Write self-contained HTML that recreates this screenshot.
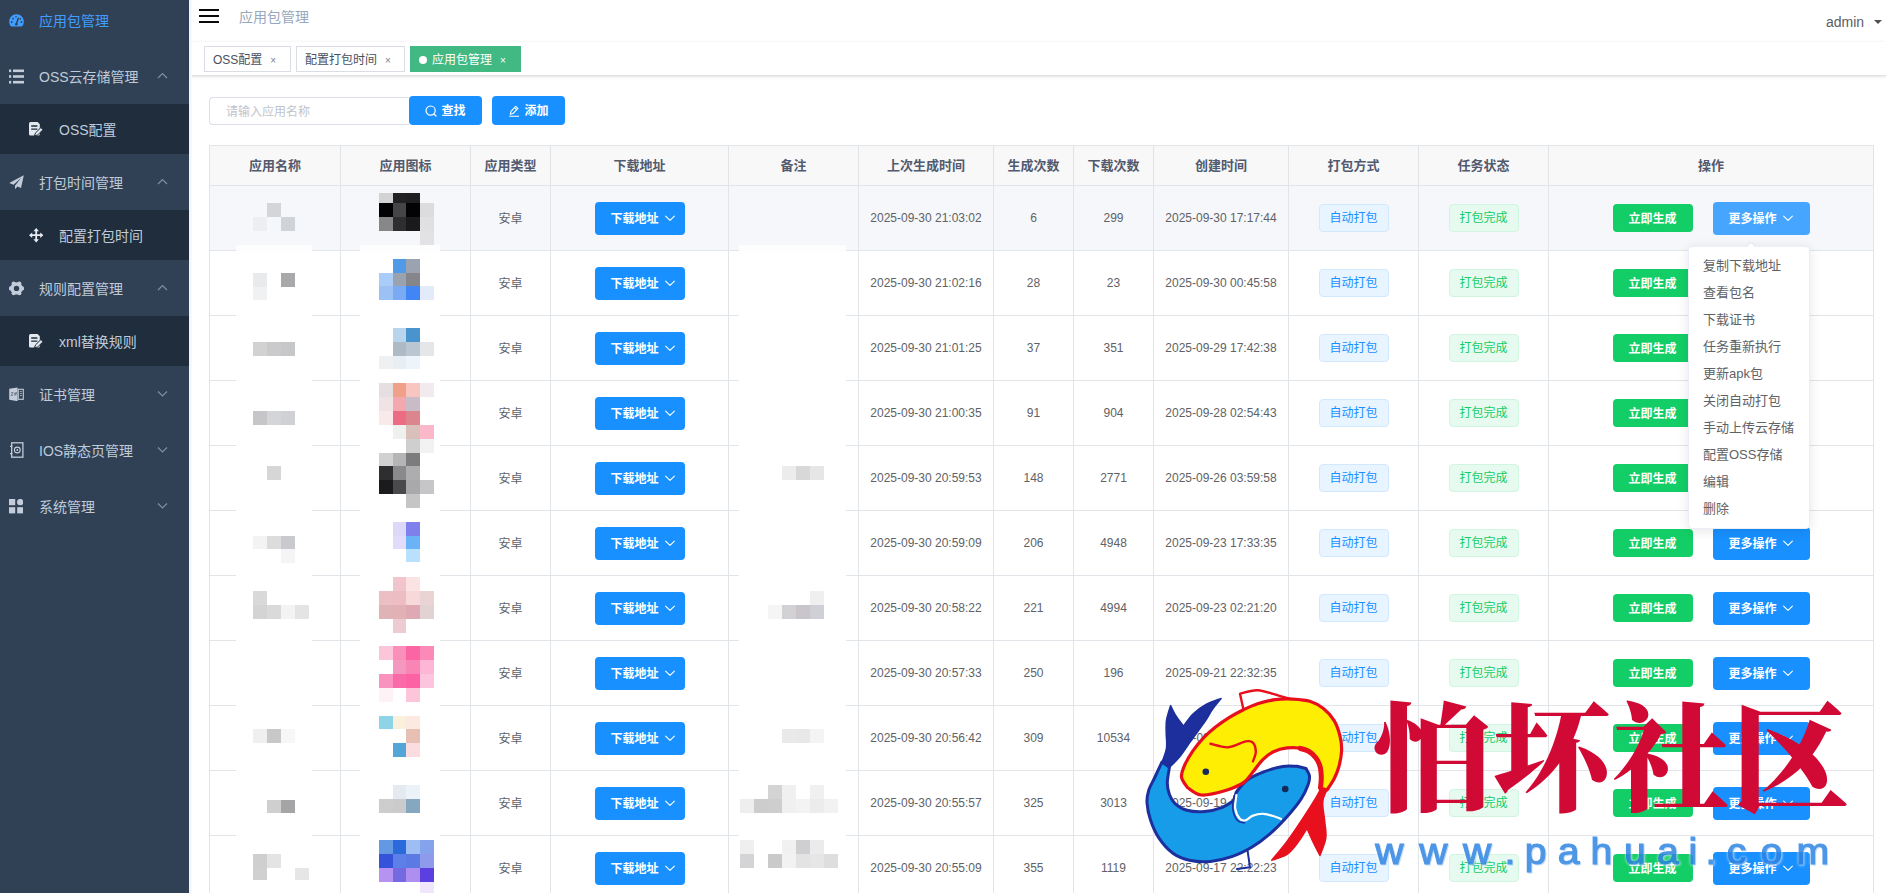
<!DOCTYPE html>
<html lang="zh-CN">
<head>
<meta charset="utf-8">
<title>应用包管理</title>
<style>
*{box-sizing:border-box;margin:0;padding:0}
html,body{width:1886px;height:893px;overflow:hidden;background:#fff}
body{font-family:"Liberation Sans","Noto Sans CJK SC",sans-serif;position:relative;color:#606266;font-size:12px}
#side{position:absolute;left:0;top:0;width:189px;height:893px;background:#304156;overflow:hidden}
.mi{position:absolute;left:0;width:189px;height:56px;color:#bfcbd9;font-size:14px;line-height:56px}
.mi .t{position:absolute;left:39px;top:1px;white-space:nowrap}
.mi.sub{background:#1f2d3d;height:50px;line-height:50px}
.mi.sub .t{left:59px}
.mi.act{color:#409eff}
#side svg.ic{position:absolute;z-index:2}
.mi svg.ca{position:absolute;left:157px;top:50%;width:11px;height:7px;margin-top:-4px}
#nav{position:absolute;left:189px;top:0;width:1697px;height:42px;background:#fff;box-shadow:0 1px 4px rgba(0,21,41,.08)}
#ham{position:absolute;left:10px;top:8.5px;width:20px;height:15px}
#ham i{position:absolute;left:0;width:20px;height:2.5px;background:#0a0a0a}
#bc{position:absolute;left:50px;top:7px;font-size:14px;line-height:20px;color:#97a8be;white-space:nowrap}
#user{position:absolute;left:1637px;top:12px;font-size:14px;line-height:20px;color:#5a5e66;white-space:nowrap}
#usercaret{position:absolute;left:1684.5px;top:20px;width:0;height:0;border:4px solid transparent;border-top:4.5px solid #505050;border-bottom:0}
#tags{position:absolute;left:189px;top:42px;width:1697px;height:34px;background:#fff;border-bottom:1px solid #dfe1e7;box-shadow:0 1px 3px 0 rgba(0,0,0,.10),0 0 3px 0 rgba(0,0,0,.03)}
.tg{position:absolute;top:4px;height:26px;line-height:26px;border:1px solid #dadde4;color:#495060;background:#fff;font-size:12px;padding:0 8px;white-space:nowrap}
.tg .x{display:inline-block;margin-left:8px;font-size:10px;color:#7b8190;position:relative;top:0px}
.tg.on{background:#42b983;border-color:#42b983;color:#fff}
.tg.on .x{color:#fff}
.tg.on:before{content:"";display:inline-block;width:8px;height:8px;border-radius:50%;background:#fff;margin-right:5px;position:relative;top:0px}
#inp{position:absolute;left:209px;top:97px;width:200px;height:28px;border:1px solid #dcdfe6;border-right:0;border-radius:4px 0 0 4px;background:#fff;font-size:12px;line-height:28px;color:#c0c4cc;padding-left:16px;white-space:nowrap}
.btn{display:inline-block;color:#fff;font-size:12px;font-weight:bold;border-radius:4px;white-space:nowrap;text-align:center;vertical-align:middle;position:relative}
.b1{position:absolute;top:96px;height:29px;line-height:30px;width:73px;background:#1890ff;border-radius:4px}
.b1 svg{display:inline-block;vertical-align:middle;position:relative;top:-1px;margin-right:4px}
table{position:absolute;left:209px;top:145px;border-collapse:collapse;table-layout:fixed;width:1664px}
th,td{border:1px solid #e1e5ea;text-align:center;overflow:hidden;white-space:nowrap}
th{height:40px;background:#f8f8f9;color:#515a6e;font-size:13px;font-weight:bold;padding-bottom:3px}
td{height:65px;color:#606266;font-size:12px}
tr.hov td{background:#f5f7fa}
td:nth-child(3){padding-bottom:2px}
.dl{width:90px;height:33px;line-height:35px;background:#1890ff;text-align:left;padding-left:16px}
.arr{position:absolute;width:12px;height:12px;top:50%;margin-top:-6px}
.dl .arr{left:69px}
.gen{width:80px;height:28px;line-height:30px;background:#13ce66}
.more{width:97px;height:33px;line-height:35px;background:#1890ff;margin-left:20px;text-align:left;padding-left:16px}
.more .arr{left:69px}
.hovb{background:#46a6ff}
.tag{display:inline-block;width:70px;height:28px;line-height:26px;border-radius:4px;font-size:12px;border:1px solid;vertical-align:middle}
.tb{background:#e8f4ff;border-color:#d1e9ff;color:#1890ff}
.tg2{}
.tag.tg{position:static;background:#e7faf0;border-color:#d0f5e0;color:#13ce66;padding:0}
#dd{position:absolute;left:1688px;top:246px;width:122px;height:283px;background:#fff;border:1px solid #ebeef5;border-radius:4px;box-shadow:0 2px 12px 0 rgba(0,0,0,.1);padding:6px 0;z-index:5}
#dd div{height:27px;line-height:25px;padding-left:14px;font-size:13px;color:#606266;white-space:nowrap}
#ddar{position:absolute;left:1747px;top:242.5px;width:0;height:0;border:4.5px solid transparent;border-top:0;border-bottom:4px solid #fff;z-index:6;filter:drop-shadow(0 -1px 1px rgba(0,0,0,.06))}
#edge{position:absolute;left:189px;top:0;width:3px;height:893px;background:linear-gradient(90deg,#eef2fb,#f8fafe);z-index:4}
#mos{position:absolute;left:0;top:0;z-index:3}
#wm{position:absolute;left:0;top:0;z-index:9}
</style>
</head>
<body>
<div id="side">
 <div class="mi act" style="top:-8px"><span class="t">应用包管理</span></div>
 <div class="mi" style="top:48px"><span class="t">OSS云存储管理</span><svg class="ca" viewBox="0 0 11 7"><path d="M1 6 L5.5 1.5 L10 6" fill="none" stroke="#7f8da2" stroke-width="1.2"/></svg></div>
 <div class="mi sub" style="top:104px"><span class="t">OSS配置</span></div>
 <div class="mi" style="top:154px"><span class="t">打包时间管理</span><svg class="ca" viewBox="0 0 11 7"><path d="M1 6 L5.5 1.5 L10 6" fill="none" stroke="#7f8da2" stroke-width="1.2"/></svg></div>
 <div class="mi sub" style="top:210px"><span class="t">配置打包时间</span></div>
 <div class="mi" style="top:260px"><span class="t">规则配置管理</span><svg class="ca" viewBox="0 0 11 7"><path d="M1 6 L5.5 1.5 L10 6" fill="none" stroke="#7f8da2" stroke-width="1.2"/></svg></div>
 <div class="mi sub" style="top:316px"><span class="t">xml替换规则</span></div>
 <div class="mi" style="top:366px"><span class="t">证书管理</span><svg class="ca" viewBox="0 0 11 7"><path d="M1 1.5 L5.5 6 L10 1.5" fill="none" stroke="#7f8da2" stroke-width="1.2"/></svg></div>
 <div class="mi" style="top:422px"><span class="t">IOS静态页管理</span><svg class="ca" viewBox="0 0 11 7"><path d="M1 1.5 L5.5 6 L10 1.5" fill="none" stroke="#7f8da2" stroke-width="1.2"/></svg></div>
 <div class="mi" style="top:478px"><span class="t">系统管理</span><svg class="ca" viewBox="0 0 11 7"><path d="M1 1.5 L5.5 6 L10 1.5" fill="none" stroke="#7f8da2" stroke-width="1.2"/></svg></div>

 <svg class="ic" style="left:8.5px;top:14px" width="15" height="13" viewBox="0 0 15 13"><path d="M7.5 .3C3.4 .3 .2 3.6 .2 7.6c0 1.7 .5 3.2 1.4 4.4 .2 .3 .5 .4 .8 .4h10.2c.3 0 .6-.1 .8-.4 .9-1.2 1.400-2.700 1.400-4.400C14.800 3.600 11.600 .3 7.500 .3Z" fill="#409eff"/><path d="M7.300 10.200 L9.300 4.200" stroke="#304156" stroke-width="1.500" stroke-linecap="round"/><circle cx="7.300" cy="10.200" r="1.300" fill="#304156"/><circle cx="2.700" cy="8" r=".9" fill="#304156"/><circle cx="4" cy="4.600" r=".9" fill="#304156"/><circle cx="7" cy="2.800" r=".8" fill="#304156"/><circle cx="11.300" cy="4.800" r=".9" fill="#304156"/><circle cx="12.400" cy="8" r=".9" fill="#304156"/></svg>
 <svg class="ic" style="left:8.500px;top:68.500px" width="15" height="15" viewBox="0 0 15 15" fill="#c3ccd8"><rect x="0" y=".5" width="2.200" height="2.600"/><rect x="4" y=".5" width="11" height="2.600"/><rect x="0" y="6.200" width="2.200" height="2.600"/><rect x="4" y="6.200" width="11" height="2.600"/><rect x="0" y="11.900" width="2.200" height="2.600"/><rect x="4" y="11.900" width="11" height="2.600"/></svg>
 <svg class="ic" style="left:28.800px;top:122.300px" width="14.500" height="14" viewBox="0 0 14.500 14"><path d="M1.600 0 H8.600 L10.800 2.200 V12 Q10.800 13.600 9.200 13.600 H1.600 Q0 13.600 0 12 V1.600 Q0 0 1.600 0 Z" fill="#e4e9ef"/><path d="M2.200 4 H8.400 M2.200 7.200 H8.400" stroke="#1f2d3d" stroke-width="1.300"/><path d="M5.400 13.900 L6.600 10.800 L11.900 5.600 L14 7.700 L8.700 12.900 Z" fill="#e4e9ef" stroke="#1f2d3d" stroke-width="1"/></svg>
 <svg class="ic" style="left:8.500px;top:174.500px" width="15" height="14.500" viewBox="0 0 15 14.500" fill="#c3ccd8"><path d="M14.800 .2 L.2 8 L4.600 9.800 L12.200 2.800 L6 10.700 L6 14.200 L8.500 11.500 L12 13 Z"/></svg>
 <svg class="ic" style="left:28.800px;top:228.400px" width="14.400" height="14.400" viewBox="0 0 14.400 14.400" fill="#e8ecf1"><path d="M7.200 0 L10 3.200 H8.100 V6.300 H11.200 V4.400 L14.400 7.200 L11.200 10 V8.100 H8.100 V11.200 H10 L7.200 14.400 L4.400 11.200 H6.300 V8.100 H3.200 V10 L0 7.200 L3.200 4.400 V6.300 H6.300 V3.200 H4.400 Z"/></svg>
 <svg class="ic" style="left:8.500px;top:280.800px" width="15" height="14.800" viewBox="0 0 15 14.800"><g fill="#c3ccd8"><circle cx="7.500" cy="7.400" r="6.200"/><circle cx="13.10" cy="7.40" r="2.1"/><circle cx="10.30" cy="12.25" r="2.1"/><circle cx="4.70" cy="12.25" r="2.1"/><circle cx="1.90" cy="7.40" r="2.1"/><circle cx="4.70" cy="2.55" r="2.1"/><circle cx="10.30" cy="2.55" r="2.1"/></g><circle cx="7.500" cy="7.400" r="2.700" fill="#304156"/></svg>
 <svg class="ic" style="left:28.800px;top:334px" width="14.500" height="14" viewBox="0 0 14.500 14"><path d="M1.600 0 H8.600 L10.800 2.200 V12 Q10.800 13.600 9.200 13.600 H1.600 Q0 13.600 0 12 V1.600 Q0 0 1.600 0 Z" fill="#e4e9ef"/><path d="M2.200 4 H8.400 M2.200 7.200 H8.400" stroke="#1f2d3d" stroke-width="1.300"/><path d="M5.400 13.900 L6.600 10.800 L11.900 5.600 L14 7.700 L8.700 12.900 Z" fill="#e4e9ef" stroke="#1f2d3d" stroke-width="1"/></svg>
 <svg class="ic" style="left:8.500px;top:386.800px" width="15" height="14.600" viewBox="0 0 15 14.600"><path d="M.2 1.800 L8.600 .4 V14.200 L.2 12.800 Z" fill="#c3ccd8"/><rect x="9.300" y="2.300" width="5" height="10" fill="none" stroke="#c3ccd8" stroke-width="1.100"/><path d="M2 5.600 H4 L2 8.400 H4 M5.400 5.600 V8.400 M6.600 8.400 V5.600 H7.600 V7 H6.600" stroke="#55657a" stroke-width=".7" fill="none"/><path d="M10.800 4.600 H12.800 M10.800 6.600 H12.800 M10.800 8.600 H12.800" stroke="#c3ccd8" stroke-width=".8"/></svg>
 <svg class="ic" style="left:9.500px;top:442px" width="14" height="16" viewBox="0 0 14 16" fill="none" stroke="#c3ccd8"><rect x="1.700" y=".8" width="11.200" height="14.400" stroke-width="1.300"/><circle cx="7.300" cy="8" r="2.900" stroke-width="1.100"/><circle cx="7.300" cy="8" r=".9" fill="#c3ccd8" stroke="none"/><path d="M0 4.300 H2.200 M0 11.700 H2.200" stroke-width="1.200"/></svg>
 <svg class="ic" style="left:8.800px;top:499.200px" width="14.400" height="14.400" viewBox="0 0 14.400 14.400" fill="#c3ccd8"><rect x="0" y="0" width="6.200" height="6.200"/><circle cx="11.200" cy="3.100" r="3.200"/><rect x="0" y="8.200" width="6.200" height="6.200"/><rect x="8.200" y="8.200" width="6.200" height="6.200"/></svg>
</div>
<div id="edge"></div>
<div id="nav">
 <div id="ham"><i style="top:0"></i><i style="top:6px"></i><i style="top:12px"></i></div>
 <div id="bc">应用包管理</div>
 <div id="user">admin</div><div id="usercaret"></div>
</div>
<div id="tags">
 <span class="tg" style="left:15px;width:87px">OSS配置<span class="x">×</span></span>
 <span class="tg" style="left:107px;width:109px">配置打包时间<span class="x">×</span></span>
 <span class="tg on" style="left:221px;width:111px">应用包管理<span class="x">×</span></span>
</div>
<div id="inp">请输入应用名称</div>
<span class="btn b1" style="left:409px"><svg width="12" height="12" viewBox="0 0 12 12"><circle cx="5.6" cy="5.6" r="4.6" fill="none" stroke="#fff" stroke-width="1.2"/><path d="M9 9 L11 11" stroke="#fff" stroke-width="1.3" stroke-linecap="round"/></svg>查找</span>
<span class="btn b1" style="left:492px"><svg width="12" height="12" viewBox="0 0 12 12"><path d="M2.300 9.300 L3 6.300 L7.700 1.300 L9.900 3.400 L5.100 8.500 Z M6.500 2.600 L8.600 4.700 M1.200 11.200 H11" fill="none" stroke="#fff" stroke-width="1.100" stroke-linejoin="round"/></svg>添加</span>
<table>
<colgroup><col style="width:131px"><col style="width:130px"><col style="width:80px"><col style="width:178px"><col style="width:130px"><col style="width:135px"><col style="width:80px"><col style="width:80px"><col style="width:135px"><col style="width:130px"><col style="width:130px"><col style="width:325px"></colgroup>
<thead><tr><th>应用名称</th><th>应用图标</th><th>应用类型</th><th>下载地址</th><th>备注</th><th>上次生成时间</th><th>生成次数</th><th>下载次数</th><th>创建时间</th><th>打包方式</th><th>任务状态</th><th>操作</th></tr></thead>
<tbody>
<tr class="hov"><td></td><td></td><td>安卓</td><td><span class="btn dl">下载地址<svg class="arr" viewBox="0 0 12 12"><path d="M1.6 4.1 L6 8.3 L10.4 4.1" fill="none" stroke="#fff" stroke-width="1.1" stroke-linecap="round" stroke-linejoin="round"/></svg></span></td><td></td><td>2025-09-30 21:03:02</td><td>6</td><td>299</td><td>2025-09-30 17:17:44</td><td><span class="tag tb">自动打包</span></td><td><span class="tag tg">打包完成</span></td><td><span class="btn gen">立即生成</span><span class="btn more hovb">更多操作<svg class="arr" viewBox="0 0 12 12"><path d="M1.6 4.1 L6 8.3 L10.4 4.1" fill="none" stroke="#fff" stroke-width="1.1" stroke-linecap="round" stroke-linejoin="round"/></svg></span></td></tr>
<tr><td></td><td></td><td>安卓</td><td><span class="btn dl">下载地址<svg class="arr" viewBox="0 0 12 12"><path d="M1.6 4.1 L6 8.3 L10.4 4.1" fill="none" stroke="#fff" stroke-width="1.1" stroke-linecap="round" stroke-linejoin="round"/></svg></span></td><td></td><td>2025-09-30 21:02:16</td><td>28</td><td>23</td><td>2025-09-30 00:45:58</td><td><span class="tag tb">自动打包</span></td><td><span class="tag tg">打包完成</span></td><td><span class="btn gen">立即生成</span><span class="btn more">更多操作<svg class="arr" viewBox="0 0 12 12"><path d="M1.6 4.1 L6 8.3 L10.4 4.1" fill="none" stroke="#fff" stroke-width="1.1" stroke-linecap="round" stroke-linejoin="round"/></svg></span></td></tr>
<tr><td></td><td></td><td>安卓</td><td><span class="btn dl">下载地址<svg class="arr" viewBox="0 0 12 12"><path d="M1.6 4.1 L6 8.3 L10.4 4.1" fill="none" stroke="#fff" stroke-width="1.1" stroke-linecap="round" stroke-linejoin="round"/></svg></span></td><td></td><td>2025-09-30 21:01:25</td><td>37</td><td>351</td><td>2025-09-29 17:42:38</td><td><span class="tag tb">自动打包</span></td><td><span class="tag tg">打包完成</span></td><td><span class="btn gen">立即生成</span><span class="btn more">更多操作<svg class="arr" viewBox="0 0 12 12"><path d="M1.6 4.1 L6 8.3 L10.4 4.1" fill="none" stroke="#fff" stroke-width="1.1" stroke-linecap="round" stroke-linejoin="round"/></svg></span></td></tr>
<tr><td></td><td></td><td>安卓</td><td><span class="btn dl">下载地址<svg class="arr" viewBox="0 0 12 12"><path d="M1.6 4.1 L6 8.3 L10.4 4.1" fill="none" stroke="#fff" stroke-width="1.1" stroke-linecap="round" stroke-linejoin="round"/></svg></span></td><td></td><td>2025-09-30 21:00:35</td><td>91</td><td>904</td><td>2025-09-28 02:54:43</td><td><span class="tag tb">自动打包</span></td><td><span class="tag tg">打包完成</span></td><td><span class="btn gen">立即生成</span><span class="btn more">更多操作<svg class="arr" viewBox="0 0 12 12"><path d="M1.6 4.1 L6 8.3 L10.4 4.1" fill="none" stroke="#fff" stroke-width="1.1" stroke-linecap="round" stroke-linejoin="round"/></svg></span></td></tr>
<tr><td></td><td></td><td>安卓</td><td><span class="btn dl">下载地址<svg class="arr" viewBox="0 0 12 12"><path d="M1.6 4.1 L6 8.3 L10.4 4.1" fill="none" stroke="#fff" stroke-width="1.1" stroke-linecap="round" stroke-linejoin="round"/></svg></span></td><td></td><td>2025-09-30 20:59:53</td><td>148</td><td>2771</td><td>2025-09-26 03:59:58</td><td><span class="tag tb">自动打包</span></td><td><span class="tag tg">打包完成</span></td><td><span class="btn gen">立即生成</span><span class="btn more">更多操作<svg class="arr" viewBox="0 0 12 12"><path d="M1.6 4.1 L6 8.3 L10.4 4.1" fill="none" stroke="#fff" stroke-width="1.1" stroke-linecap="round" stroke-linejoin="round"/></svg></span></td></tr>
<tr><td></td><td></td><td>安卓</td><td><span class="btn dl">下载地址<svg class="arr" viewBox="0 0 12 12"><path d="M1.6 4.1 L6 8.3 L10.4 4.1" fill="none" stroke="#fff" stroke-width="1.1" stroke-linecap="round" stroke-linejoin="round"/></svg></span></td><td></td><td>2025-09-30 20:59:09</td><td>206</td><td>4948</td><td>2025-09-23 17:33:35</td><td><span class="tag tb">自动打包</span></td><td><span class="tag tg">打包完成</span></td><td><span class="btn gen">立即生成</span><span class="btn more">更多操作<svg class="arr" viewBox="0 0 12 12"><path d="M1.6 4.1 L6 8.3 L10.4 4.1" fill="none" stroke="#fff" stroke-width="1.1" stroke-linecap="round" stroke-linejoin="round"/></svg></span></td></tr>
<tr><td></td><td></td><td>安卓</td><td><span class="btn dl">下载地址<svg class="arr" viewBox="0 0 12 12"><path d="M1.6 4.1 L6 8.3 L10.4 4.1" fill="none" stroke="#fff" stroke-width="1.1" stroke-linecap="round" stroke-linejoin="round"/></svg></span></td><td></td><td>2025-09-30 20:58:22</td><td>221</td><td>4994</td><td>2025-09-23 02:21:20</td><td><span class="tag tb">自动打包</span></td><td><span class="tag tg">打包完成</span></td><td><span class="btn gen">立即生成</span><span class="btn more">更多操作<svg class="arr" viewBox="0 0 12 12"><path d="M1.6 4.1 L6 8.3 L10.4 4.1" fill="none" stroke="#fff" stroke-width="1.1" stroke-linecap="round" stroke-linejoin="round"/></svg></span></td></tr>
<tr><td></td><td></td><td>安卓</td><td><span class="btn dl">下载地址<svg class="arr" viewBox="0 0 12 12"><path d="M1.6 4.1 L6 8.3 L10.4 4.1" fill="none" stroke="#fff" stroke-width="1.1" stroke-linecap="round" stroke-linejoin="round"/></svg></span></td><td></td><td>2025-09-30 20:57:33</td><td>250</td><td>196</td><td>2025-09-21 22:32:35</td><td><span class="tag tb">自动打包</span></td><td><span class="tag tg">打包完成</span></td><td><span class="btn gen">立即生成</span><span class="btn more">更多操作<svg class="arr" viewBox="0 0 12 12"><path d="M1.6 4.1 L6 8.3 L10.4 4.1" fill="none" stroke="#fff" stroke-width="1.1" stroke-linecap="round" stroke-linejoin="round"/></svg></span></td></tr>
<tr><td></td><td></td><td>安卓</td><td><span class="btn dl">下载地址<svg class="arr" viewBox="0 0 12 12"><path d="M1.6 4.1 L6 8.3 L10.4 4.1" fill="none" stroke="#fff" stroke-width="1.1" stroke-linecap="round" stroke-linejoin="round"/></svg></span></td><td></td><td>2025-09-30 20:56:42</td><td>309</td><td>10534</td><td>2025-09-20 09:11:06</td><td><span class="tag tb">自动打包</span></td><td><span class="tag tg">打包完成</span></td><td><span class="btn gen">立即生成</span><span class="btn more">更多操作<svg class="arr" viewBox="0 0 12 12"><path d="M1.6 4.1 L6 8.3 L10.4 4.1" fill="none" stroke="#fff" stroke-width="1.1" stroke-linecap="round" stroke-linejoin="round"/></svg></span></td></tr>
<tr><td></td><td></td><td>安卓</td><td><span class="btn dl">下载地址<svg class="arr" viewBox="0 0 12 12"><path d="M1.6 4.1 L6 8.3 L10.4 4.1" fill="none" stroke="#fff" stroke-width="1.1" stroke-linecap="round" stroke-linejoin="round"/></svg></span></td><td></td><td>2025-09-30 20:55:57</td><td>325</td><td>3013</td><td>2025-09-19 12:40:51</td><td><span class="tag tb">自动打包</span></td><td><span class="tag tg">打包完成</span></td><td><span class="btn gen">立即生成</span><span class="btn more">更多操作<svg class="arr" viewBox="0 0 12 12"><path d="M1.6 4.1 L6 8.3 L10.4 4.1" fill="none" stroke="#fff" stroke-width="1.1" stroke-linecap="round" stroke-linejoin="round"/></svg></span></td></tr>
<tr><td></td><td></td><td>安卓</td><td><span class="btn dl">下载地址<svg class="arr" viewBox="0 0 12 12"><path d="M1.6 4.1 L6 8.3 L10.4 4.1" fill="none" stroke="#fff" stroke-width="1.1" stroke-linecap="round" stroke-linejoin="round"/></svg></span></td><td></td><td>2025-09-30 20:55:09</td><td>355</td><td>1119</td><td>2025-09-17 22:22:23</td><td><span class="tag tb">自动打包</span></td><td><span class="tag tg">打包完成</span></td><td><span class="btn gen">立即生成</span><span class="btn more">更多操作<svg class="arr" viewBox="0 0 12 12"><path d="M1.6 4.1 L6 8.3 L10.4 4.1" fill="none" stroke="#fff" stroke-width="1.1" stroke-linecap="round" stroke-linejoin="round"/></svg></span></td></tr>
</tbody>
</table>
<div id="ddar"></div>
<div id="dd"><div>复制下载地址</div><div>查看包名</div><div>下载证书</div><div>任务重新执行</div><div>更新apk包</div><div>关闭自动打包</div><div>手动上传云存储</div><div>配置OSS存储</div><div>编辑</div><div>删除</div></div>
<svg id="mos" width="1886" height="893" viewBox="0 0 1886 893" shape-rendering="crispEdges">
<rect x="236" y="244.500" width="76" height="7" fill="#fdfdfe"/>
<rect x="360" y="244.500" width="80" height="7" fill="#fdfdfe"/>
<rect x="739" y="244.500" width="107" height="7" fill="#fdfdfe"/>
<rect x="236" y="314" width="76" height="3" fill="#fff"/>
<rect x="360" y="314" width="80" height="3" fill="#fff"/>
<rect x="739" y="314" width="107" height="3" fill="#fff"/>
<rect x="236" y="379" width="76" height="3" fill="#fff"/>
<rect x="360" y="379" width="80" height="3" fill="#fff"/>
<rect x="739" y="379" width="107" height="3" fill="#fff"/>
<rect x="236" y="444" width="76" height="3" fill="#fff"/>
<rect x="360" y="444" width="80" height="3" fill="#fff"/>
<rect x="739" y="444" width="107" height="3" fill="#fff"/>
<rect x="236" y="509" width="76" height="3" fill="#fff"/>
<rect x="360" y="509" width="80" height="3" fill="#fff"/>
<rect x="739" y="509" width="107" height="3" fill="#fff"/>
<rect x="236" y="574" width="76" height="3" fill="#fff"/>
<rect x="360" y="574" width="80" height="3" fill="#fff"/>
<rect x="739" y="574" width="107" height="3" fill="#fff"/>
<rect x="236" y="639" width="76" height="3" fill="#fff"/>
<rect x="360" y="639" width="80" height="3" fill="#fff"/>
<rect x="739" y="639" width="107" height="3" fill="#fff"/>
<rect x="236" y="704" width="76" height="3" fill="#fff"/>
<rect x="360" y="704" width="80" height="3" fill="#fff"/>
<rect x="739" y="704" width="107" height="3" fill="#fff"/>
<rect x="236" y="769" width="76" height="3" fill="#fff"/>
<rect x="360" y="769" width="80" height="3" fill="#fff"/>
<rect x="739" y="769" width="107" height="3" fill="#fff"/>
<rect x="236" y="834" width="76" height="3" fill="#fff"/>
<rect x="360" y="834" width="80" height="3" fill="#fff"/>
<rect x="739" y="834" width="107" height="3" fill="#fff"/>
<rect x="267" y="203" width="14" height="14" fill="#d4d5d8"/>
<rect x="253" y="217" width="14" height="14" fill="#eceef2"/>
<rect x="281" y="217" width="14" height="14" fill="#d0d4d9"/>
<rect x="253" y="273" width="14" height="14" fill="#e9eaec"/>
<rect x="281" y="273" width="14" height="14" fill="#a9a9ab"/>
<rect x="253" y="287" width="14" height="13" fill="#f0f1f3"/>
<rect x="253" y="342" width="14" height="14" fill="#d2d2d3"/>
<rect x="267" y="342" width="14" height="14" fill="#cacacc"/>
<rect x="281" y="342" width="14" height="14" fill="#c6c7c9"/>
<rect x="253" y="411" width="14" height="14" fill="#c6c6c8"/>
<rect x="267" y="411" width="14" height="14" fill="#d3d5d9"/>
<rect x="281" y="411" width="14" height="14" fill="#cfd1d5"/>
<rect x="267" y="466" width="14" height="14" fill="#d6d6d7"/>
<rect x="253" y="536" width="14" height="13" fill="#f3f3f3"/>
<rect x="267" y="536" width="14" height="13" fill="#dcdcdd"/>
<rect x="281" y="536" width="14" height="13" fill="#c8cacd"/>
<rect x="281" y="549" width="14" height="14" fill="#f5f5f6"/>
<rect x="253" y="591" width="14" height="14" fill="#d9d9da"/>
<rect x="253" y="605" width="14" height="13.5" fill="#d4d4d5"/>
<rect x="267" y="605" width="14" height="13.5" fill="#dadadb"/>
<rect x="281" y="605" width="14" height="13.5" fill="#f3f3f3"/>
<rect x="295" y="605" width="14" height="13.5" fill="#e4e4e4"/>
<rect x="253" y="729" width="14" height="14" fill="#efefef"/>
<rect x="267" y="729" width="14" height="14" fill="#c8c8c9"/>
<rect x="281" y="729" width="14" height="14" fill="#f7f7f7"/>
<rect x="267" y="799.5" width="14" height="13.5" fill="#cfcfd0"/>
<rect x="281" y="799.5" width="14" height="13.5" fill="#a5a5a7"/>
<rect x="253" y="854" width="14" height="14" fill="#cfcfd0"/>
<rect x="267" y="854" width="14" height="14" fill="#e4e4e5"/>
<rect x="253" y="868" width="14" height="12" fill="#d0d0d1"/>
<rect x="295" y="868" width="14" height="12" fill="#e6e6e7"/>
<rect x="379" y="193" width="13.5" height="10" fill="#d3d3d4"/>
<rect x="392.5" y="193" width="13.5" height="10" fill="#222224"/>
<rect x="406" y="193" width="14" height="10" fill="#1f1f22"/>
<rect x="379" y="203" width="13.5" height="14" fill="#020204"/>
<rect x="392.5" y="203" width="13.5" height="14" fill="#454547"/>
<rect x="406" y="203" width="14" height="14" fill="#030305"/>
<rect x="420" y="203" width="14" height="14" fill="#dcdcde"/>
<rect x="379" y="217" width="13.5" height="14" fill="#878788"/>
<rect x="392.5" y="217" width="13.5" height="14" fill="#2e2e30"/>
<rect x="406" y="217" width="14" height="14" fill="#1a1a1d"/>
<rect x="420" y="217" width="14" height="14" fill="#e0e0e2"/>
<rect x="420" y="231" width="14" height="14" fill="#e2e2e4"/>
<rect x="392.5" y="259" width="13.5" height="14" fill="#4f9be8"/>
<rect x="406" y="259" width="14" height="14" fill="#9aa3af"/>
<rect x="379" y="273" width="13.5" height="13" fill="#a9cdf8"/>
<rect x="392.5" y="273" width="13.5" height="13" fill="#9aa2b0"/>
<rect x="406" y="273" width="14" height="13" fill="#858689"/>
<rect x="379" y="286" width="13.5" height="14" fill="#9cc2f5"/>
<rect x="392.5" y="286" width="13.5" height="14" fill="#7aaaf3"/>
<rect x="406" y="286" width="14" height="14" fill="#4285f4"/>
<rect x="420" y="286" width="14" height="14" fill="#e3eafa"/>
<rect x="392.5" y="328" width="13.5" height="14" fill="#b9d5ee"/>
<rect x="406" y="328" width="14" height="14" fill="#4a94cd"/>
<rect x="392.5" y="342" width="13.5" height="14" fill="#afbbc4"/>
<rect x="406" y="342" width="14" height="14" fill="#bac6d1"/>
<rect x="420" y="342" width="14" height="14" fill="#e5e6e7"/>
<rect x="379" y="356" width="13.5" height="13" fill="#eef0f2"/>
<rect x="392.5" y="356" width="13.5" height="13" fill="#e7eef4"/>
<rect x="406" y="356" width="14" height="13" fill="#edf4fc"/>
<rect x="379" y="383" width="13.5" height="14" fill="#e6dfe1"/>
<rect x="392.5" y="383" width="13.5" height="14" fill="#f0a089"/>
<rect x="406" y="383" width="14" height="14" fill="#f9c5c0"/>
<rect x="420" y="383" width="14" height="14" fill="#f1ebee"/>
<rect x="379" y="397" width="13.5" height="14" fill="#f1e3e5"/>
<rect x="392.5" y="397" width="13.5" height="14" fill="#f3a7af"/>
<rect x="406" y="397" width="14" height="14" fill="#c9bcc7"/>
<rect x="379" y="411" width="13.5" height="14" fill="#fae9eb"/>
<rect x="392.5" y="411" width="13.5" height="14" fill="#ec6c84"/>
<rect x="406" y="411" width="14" height="14" fill="#dc858f"/>
<rect x="392.5" y="425" width="13.5" height="14" fill="#eef1ee"/>
<rect x="406" y="425" width="14" height="14" fill="#d9c0bb"/>
<rect x="420" y="425" width="14" height="14" fill="#fbb8c8"/>
<rect x="406" y="439" width="14" height="14" fill="#cfcfd0"/>
<rect x="420" y="439" width="14" height="14" fill="#f2f2f2"/>
<rect x="379" y="453" width="13.5" height="13" fill="#d1d1d2"/>
<rect x="392.5" y="453" width="13.5" height="13" fill="#b5b5b6"/>
<rect x="406" y="453" width="14" height="13" fill="#7c7c7e"/>
<rect x="379" y="466" width="13.5" height="14" fill="#2e2e30"/>
<rect x="392.5" y="466" width="13.5" height="14" fill="#8a8a8c"/>
<rect x="406" y="466" width="14" height="14" fill="#adadaf"/>
<rect x="379" y="480" width="13.5" height="14" fill="#1b1b1d"/>
<rect x="392.5" y="480" width="13.5" height="14" fill="#4a4a4c"/>
<rect x="406" y="480" width="14" height="14" fill="#a9a9ab"/>
<rect x="420" y="480" width="14" height="14" fill="#c6c6c8"/>
<rect x="406" y="494" width="14" height="14" fill="#c5c5c6"/>
<rect x="392.5" y="522" width="13.5" height="14" fill="#dcd8f8"/>
<rect x="406" y="522" width="14" height="14" fill="#7f80ec"/>
<rect x="392.5" y="536" width="13.5" height="13" fill="#e2dcfa"/>
<rect x="406" y="536" width="14" height="13" fill="#6bb3f7"/>
<rect x="406" y="549" width="14" height="13" fill="#b9e0fc"/>
<rect x="392.5" y="577" width="13.5" height="14" fill="#f2c4cb"/>
<rect x="406" y="577" width="14" height="14" fill="#fce3e3"/>
<rect x="379" y="591" width="13.5" height="14" fill="#ecbfc5"/>
<rect x="392.5" y="591" width="13.5" height="14" fill="#ecbdc2"/>
<rect x="406" y="591" width="14" height="14" fill="#f7d9d9"/>
<rect x="420" y="591" width="14" height="14" fill="#e9d3d3"/>
<rect x="379" y="605" width="13.5" height="14" fill="#e0b3b6"/>
<rect x="392.5" y="605" width="13.5" height="14" fill="#e1b1b5"/>
<rect x="406" y="605" width="14" height="14" fill="#dfa9b3"/>
<rect x="420" y="605" width="14" height="14" fill="#e3d2d2"/>
<rect x="392.5" y="619" width="13.5" height="14" fill="#ecccd1"/>
<rect x="379" y="646" width="13.5" height="14" fill="#fcc5da"/>
<rect x="392.5" y="646" width="13.5" height="14" fill="#fa8fba"/>
<rect x="406" y="646" width="14" height="14" fill="#fb65a4"/>
<rect x="420" y="646" width="14" height="14" fill="#fb8ab9"/>
<rect x="392.5" y="660" width="13.5" height="14" fill="#f598c0"/>
<rect x="406" y="660" width="14" height="14" fill="#f984b6"/>
<rect x="420" y="660" width="14" height="14" fill="#fdb6d6"/>
<rect x="379" y="674" width="13.5" height="14" fill="#fa92bf"/>
<rect x="392.5" y="674" width="13.5" height="14" fill="#fa6aa8"/>
<rect x="406" y="674" width="14" height="14" fill="#fc62a4"/>
<rect x="420" y="674" width="14" height="14" fill="#fdc4de"/>
<rect x="379" y="688" width="13.5" height="14" fill="#fdf3f6"/>
<rect x="406" y="688" width="14" height="14" fill="#fcc5da"/>
<rect x="379" y="716" width="13.5" height="13" fill="#8dd4e6"/>
<rect x="392.5" y="716" width="13.5" height="13" fill="#fbf0dc"/>
<rect x="406" y="716" width="14" height="13" fill="#fce9df"/>
<rect x="406" y="729" width="14" height="14" fill="#e8c0b3"/>
<rect x="392.5" y="743" width="13.5" height="14" fill="#54a5d8"/>
<rect x="406" y="743" width="14" height="14" fill="#fbdde0"/>
<rect x="392.5" y="785" width="13.5" height="14" fill="#e5eaf0"/>
<rect x="406" y="785" width="14" height="14" fill="#ebf2f8"/>
<rect x="379" y="799" width="13.5" height="14" fill="#cdcdce"/>
<rect x="392.5" y="799" width="13.5" height="14" fill="#cbcbcd"/>
<rect x="406" y="799" width="14" height="14" fill="#85a8c0"/>
<rect x="379" y="840" width="13.5" height="14" fill="#6398e3"/>
<rect x="392.5" y="840" width="13.5" height="14" fill="#2a6adb"/>
<rect x="406" y="840" width="14" height="14" fill="#9dbdf3"/>
<rect x="420" y="840" width="14" height="14" fill="#85a3ec"/>
<rect x="379" y="854" width="13.5" height="14" fill="#3552da"/>
<rect x="392.5" y="854" width="13.5" height="14" fill="#5d80e8"/>
<rect x="406" y="854" width="14" height="14" fill="#5b7be3"/>
<rect x="420" y="854" width="14" height="14" fill="#8e9bec"/>
<rect x="379" y="868" width="13.5" height="14" fill="#b693f1"/>
<rect x="392.5" y="868" width="13.5" height="14" fill="#7569e1"/>
<rect x="406" y="868" width="14" height="14" fill="#ae8ff0"/>
<rect x="420" y="868" width="14" height="14" fill="#5b3fe0"/>
<rect x="420" y="882" width="14" height="11" fill="#f0e6fc"/>
<rect x="782" y="466" width="14" height="14" fill="#ececed"/>
<rect x="796" y="466" width="14" height="14" fill="#d8d8d9"/>
<rect x="810" y="466" width="14" height="14" fill="#e6e6e7"/>
<rect x="810" y="591" width="14" height="14" fill="#efeff0"/>
<rect x="768" y="605" width="14" height="14" fill="#f5f5f6"/>
<rect x="782" y="605" width="14" height="14" fill="#d2d2d4"/>
<rect x="796" y="605" width="14" height="14" fill="#c9c5ca"/>
<rect x="810" y="605" width="14" height="14" fill="#cfcfd6"/>
<rect x="782" y="729" width="14" height="14" fill="#e9e9ea"/>
<rect x="796" y="729" width="14" height="14" fill="#e8e8e9"/>
<rect x="810" y="729" width="14" height="14" fill="#f4f4f4"/>
<rect x="768" y="785" width="14" height="14" fill="#d4d4d5"/>
<rect x="782" y="785" width="14" height="14" fill="#f0f0f1"/>
<rect x="810" y="785" width="14" height="14" fill="#f0f0f1"/>
<rect x="740" y="799" width="14" height="14" fill="#eeeeef"/>
<rect x="754" y="799" width="14" height="14" fill="#cdcdce"/>
<rect x="768" y="799" width="14" height="14" fill="#cecece"/>
<rect x="782" y="799" width="14" height="14" fill="#f0f0f0"/>
<rect x="796" y="799" width="14" height="14" fill="#f3f3f3"/>
<rect x="810" y="799" width="14" height="14" fill="#ececed"/>
<rect x="824" y="799" width="14" height="14" fill="#f2f2f2"/>
<rect x="740" y="840" width="14" height="14" fill="#efeff0"/>
<rect x="782" y="840" width="14" height="14" fill="#f1f1f2"/>
<rect x="796" y="840" width="14" height="14" fill="#cfcfd1"/>
<rect x="810" y="840" width="14" height="14" fill="#ebebec"/>
<rect x="740" y="854" width="14" height="14" fill="#d4d4d6"/>
<rect x="768" y="854" width="14" height="14" fill="#cacacb"/>
<rect x="782" y="854" width="14" height="14" fill="#f2f2f2"/>
<rect x="796" y="854" width="14" height="14" fill="#e3e3e4"/>
<rect x="810" y="854" width="14" height="14" fill="#e6e6e7"/>
<rect x="824" y="854" width="14" height="14" fill="#dededf"/>
</svg>
<style>
#wmt{position:absolute;left:1373px;top:671px;z-index:20;font-family:"Noto Serif CJK SC","Liberation Serif",serif;font-weight:900;font-size:118px;line-height:160px;color:#d00a35;white-space:nowrap;letter-spacing:1.500px}
#www{position:absolute;left:0;top:0;z-index:10;font-family:"Liberation Sans",sans-serif;opacity:.85;filter:drop-shadow(1.500px 1px 0 rgba(150,195,245,.7)) drop-shadow(0 0 1.500px rgba(255,255,255,.9))}
</style><svg id="fish" style="position:absolute;left:0;top:0;z-index:20" width="1886" height="893" viewBox="0 0 1886 893">
<g stroke-linejoin="round" stroke-linecap="round">
<path d="M1162.3 761.4 C1163.0 759.2 1165.8 752.7 1166.5 748.0 C1167.2 743.3 1166.2 737.6 1166.2 733.0 C1166.2 728.4 1165.8 724.9 1166.5 720.3 C1167.2 715.7 1169.9 708.0 1170.6 705.6 L1170.6 705.6 C1171.5 707.3 1173.8 712.6 1176.0 716.0 C1178.2 719.4 1182.2 724.5 1183.5 726.2 L1183.5 726.2 C1185.1 724.2 1189.2 717.6 1193.0 714.0 C1196.8 710.4 1201.3 707.1 1206.0 704.5 C1210.7 701.9 1218.6 699.5 1221.1 698.5 L1221.1 698.5 C1219.6 700.4 1214.5 706.4 1212.0 710.0 C1209.5 713.6 1209.4 715.1 1205.8 720.3 C1202.2 725.5 1195.1 735.1 1190.6 741.4 C1186.1 747.7 1182.3 753.6 1178.8 757.9 C1175.3 762.2 1171.0 765.7 1169.4 767.3 Z" fill="#1c2f9c" stroke="#1c2f9c" stroke-width="1.500"/>
<path d="M1162.0 762.0 C1160.8 764.5 1157.2 772.3 1155.0 777.0 C1152.8 781.7 1150.1 785.7 1148.8 790.0 C1147.5 794.3 1146.7 797.6 1147.0 802.6 C1147.3 807.6 1148.6 814.4 1150.6 820.3 C1152.6 826.2 1155.1 832.4 1158.8 837.9 C1162.5 843.4 1167.8 849.5 1172.9 853.2 C1178.0 856.9 1183.1 858.8 1189.4 860.2 C1195.7 861.6 1203.5 862.0 1210.5 861.4 C1217.5 860.8 1224.8 859.1 1231.7 856.7 C1238.6 854.4 1245.4 851.0 1251.7 847.3 C1258.0 843.6 1263.4 839.5 1269.3 834.4 C1275.2 829.3 1281.7 822.6 1287.0 816.7 C1292.3 810.8 1297.5 804.4 1301.0 799.1 C1304.5 793.8 1306.6 788.9 1308.0 785.0 C1309.4 781.1 1309.8 778.8 1309.5 776.0 C1309.2 773.2 1306.6 769.8 1306.0 768.5 L1297.0 766.3 C1294.6 766.3 1288.2 765.5 1282.7 766.4 C1277.2 767.3 1269.7 769.6 1263.7 771.9 C1257.7 774.2 1251.5 776.8 1246.9 780.2 C1242.3 783.6 1238.0 790.2 1236.2 792.2 L1234.0 800.3 C1232.0 801.5 1227.2 805.4 1222.3 807.3 C1217.4 809.2 1210.6 811.0 1204.7 811.5 C1198.8 812.0 1191.9 811.6 1187.0 810.3 C1182.1 809.0 1178.2 806.4 1175.3 803.8 C1172.4 801.1 1170.7 797.9 1169.4 794.4 C1168.1 790.9 1167.3 787.5 1167.3 783.0 C1167.3 778.5 1169.1 769.9 1169.4 767.3 Z" fill="#169ce8" stroke="#1c2f9c" stroke-width="3"/>
<path d="M1236.4 795.0 C1236.2 797.2 1234.6 804.5 1235.2 808.5 C1235.8 812.5 1238.2 817.1 1240.0 819.1 C1241.8 821.1 1243.6 820.9 1245.8 820.3 C1248.0 819.7 1250.0 816.7 1252.9 815.6 C1255.9 814.5 1259.8 813.6 1263.5 813.8 C1267.2 814.0 1272.3 815.8 1275.2 816.7 C1278.1 817.6 1280.0 818.6 1281.0 819.0" fill="none" stroke="#fff" stroke-width="2.200"/>
<path d="M1234.0 796.0 C1233.8 798.2 1232.2 804.9 1232.8 809.0 C1233.4 813.1 1235.5 818.2 1237.5 820.5 C1239.5 822.8 1243.3 822.4 1244.5 822.8" fill="none" stroke="#1c2f9c" stroke-width="1.600"/>
<path d="M1247.600 850.800 L1250 867.300 L1237 869" fill="none" stroke="#1c2f9c" stroke-width="2"/>
<circle cx="1285.200" cy="789" r="3.300" fill="#14285a"/>
<path d="M1331.0 782.0 C1329.7 785.0 1324.1 793.6 1323.0 800.0 C1321.9 806.4 1324.1 814.0 1324.6 820.3 C1325.1 826.6 1326.6 832.0 1325.8 837.9 C1325.0 843.8 1320.9 852.6 1319.9 855.5 L1319.9 855.5 C1318.7 853.1 1315.0 845.9 1312.8 841.4 C1310.6 836.9 1308.0 830.6 1307.0 828.5 L1307.0 828.5 C1305.6 830.6 1302.0 837.1 1298.7 841.4 C1295.4 845.7 1291.5 851.3 1287.0 854.4 C1282.5 857.5 1274.2 859.2 1271.7 860.2 L1271.7 860.2 C1274.2 857.1 1281.5 848.8 1287.0 841.4 C1292.5 834.0 1299.7 823.0 1304.6 815.6 C1309.5 808.2 1313.5 801.7 1316.4 796.8 C1319.3 791.9 1321.1 787.8 1322.0 786.0 Z" fill="#e8101c" stroke="#e8101c" stroke-width="1.500"/>
<path d="M1243.5 709.7 L1240.0 693.8 C1242.9 693.2 1251.1 690.0 1257.6 690.3 C1264.0 690.6 1273.0 694.1 1278.7 695.6 C1284.4 697.1 1289.8 698.9 1292.0 699.5 Z" fill="#fff" stroke="#e8101c" stroke-width="2.400"/>
<path d="M1187.3 787.4 C1186.3 785.7 1181.9 780.7 1181.5 777.0 C1181.1 773.3 1182.8 769.4 1184.7 765.0 C1186.6 760.6 1189.8 755.3 1192.9 750.8 C1196.0 746.3 1199.8 741.8 1203.5 737.9 C1207.2 734.0 1210.9 730.7 1215.2 727.3 C1219.5 723.9 1224.7 720.2 1229.4 717.3 C1234.1 714.4 1238.8 712.0 1243.5 709.7 C1248.2 707.5 1252.3 705.5 1257.6 703.8 C1262.9 702.1 1269.3 700.5 1275.2 699.7 C1281.1 698.9 1286.9 698.8 1292.8 699.1 C1298.7 699.4 1305.4 699.9 1310.5 701.5 C1315.6 703.1 1319.5 705.4 1323.4 708.5 C1327.3 711.6 1331.2 715.8 1334.0 720.3 C1336.8 724.8 1338.6 730.5 1339.9 735.6 C1341.2 740.7 1341.8 745.5 1341.6 750.8 C1341.4 756.1 1340.0 762.6 1338.7 767.3 C1337.4 772.0 1336.0 775.2 1334.0 779.0 C1332.0 782.8 1328.2 788.2 1327.0 790.0 L1320.5 788.0 C1320.6 786.0 1321.4 779.8 1321.3 776.0 C1321.2 772.2 1321.1 768.4 1319.9 765.0 C1318.7 761.6 1316.5 758.1 1314.0 755.5 C1311.5 752.9 1309.1 750.4 1304.6 749.1 C1300.1 747.8 1292.3 747.4 1287.0 747.9 C1281.7 748.4 1277.0 750.0 1272.9 752.0 C1268.8 754.0 1265.6 756.9 1262.3 760.2 C1259.0 763.5 1256.0 768.3 1252.9 772.0 C1249.8 775.7 1248.1 779.5 1243.5 782.6 C1238.9 785.7 1232.5 788.4 1225.5 790.5 C1218.5 792.6 1208.0 795.5 1201.6 795.0 C1195.2 794.5 1189.7 788.7 1187.3 787.4 Z" fill="#fdee04" stroke="#e8101c" stroke-width="3.200"/>
<path d="M1300.0 748.3 C1301.5 748.8 1306.3 749.9 1309.0 751.5 C1311.7 753.1 1314.1 755.4 1316.0 758.0 C1317.9 760.6 1319.3 763.7 1320.2 767.0 C1321.1 770.3 1321.2 774.5 1321.3 778.0 C1321.3 781.5 1320.6 786.3 1320.5 788.0" fill="none" stroke="#e8101c" stroke-width="5"/>
<path d="M1210.5 743.8 C1213.5 744.4 1222.3 747.7 1228.2 747.3 C1234.1 746.9 1241.7 742.2 1245.8 741.4 C1249.9 740.6 1251.2 740.8 1252.9 742.6 C1254.6 744.4 1255.8 748.9 1255.8 752.0 C1255.8 755.1 1253.4 759.8 1252.9 761.4" fill="none" stroke="#e8101c" stroke-width="2.400"/>
<circle cx="1205.800" cy="771.800" r="3.300" fill="#14285a"/>
</g></svg><div id="wmt">怕坏社区</div><svg id="www" width="1886" height="893" viewBox="0 0 1886 893"><text transform="scale(1.07,1)" x="1285.3 1326.5 1367.4 1406.0 1425.1 1455.9 1486.5 1517.8 1548.7 1578.0 1594.0 1613.8 1645.4 1679.0" y="864.500" font-size="36.5" fill="#2f84e2" stroke="#2f84e2" stroke-width="1.100">www.pahuai.com</text></svg>
</body>
</html>
